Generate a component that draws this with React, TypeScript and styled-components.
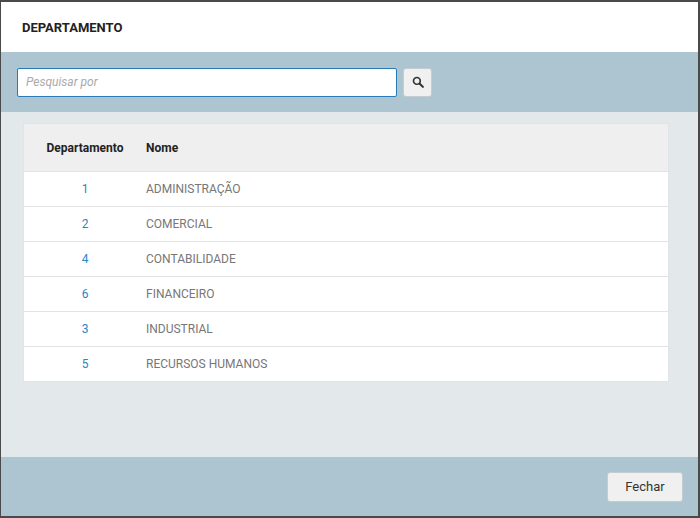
import styled, { createGlobalStyle } from 'styled-components'

const Global = createGlobalStyle`
  html, body { margin: 0; padding: 0; background: #4a4a4a; }
  * { box-sizing: border-box; }
`

const rows = [
  { id: 1, name: 'ADMINISTRAÇÃO' },
  { id: 2, name: 'COMERCIAL' },
  { id: 4, name: 'CONTABILIDADE' },
  { id: 6, name: 'FINANCEIRO' },
  { id: 3, name: 'INDUSTRIAL' },
  { id: 5, name: 'RECURSOS HUMANOS' },
]

export default function App() {
  return (
    <>
      <Global />
      <Modal>
        <Header>DEPARTAMENTO</Header>
        <SearchBar>
          <Input placeholder="Pesquisar por" />
          <SearchButton>
            <svg width="12" height="12" viewBox="0 0 16 16">
              <circle cx="6.5" cy="6.5" r="4.5" fill="none" stroke="#333" strokeWidth="2.2" />
              <path d="M10 10 L14.5 14.5" stroke="#333" strokeWidth="2.8" strokeLinecap="round" />
            </svg>
          </SearchButton>
        </SearchBar>
        <Body>
          <Table>
            <HeadRow>
              <IdCell>Departamento</IdCell>
              <NameCell>Nome</NameCell>
            </HeadRow>
            {rows.map(r => (
              <Row key={r.id}>
                <IdCell $link>{r.id}</IdCell>
                <NameCell>{r.name}</NameCell>
              </Row>
            ))}
          </Table>
        </Body>
        <Footer>
          <CloseButton>Fechar</CloseButton>
        </Footer>
      </Modal>
    </>
  )
}

const Modal = styled.div`
  width: 700px;
  height: 518px;
  border: 2px solid #4a4a4a;
  border-left-width: 1px;
  display: flex;
  flex-direction: column;
  font-family: Roboto, 'Liberation Sans', sans-serif;
  background: #e3e8eb;
`

const Header = styled.div`
  height: 50px;
  background: #fff;
  padding: 0 0 0 21px;
  display: flex;
  align-items: center;
  font-size: 13px;
  font-weight: 700;
  color: #222;
`

const SearchBar = styled.div`
  height: 60px;
  background: #adc4d1;
  display: flex;
  align-items: center;
  gap: 6px;
  padding: 0 16px;
`

const Input = styled.input`
  width: 380px;
  height: 29px;
  border: 1px solid #2a7ab8;
  border-radius: 2px;
  padding: 0 8px;
  font-family: inherit;
  font-size: 12px;
  outline: none;
  &::placeholder { color: #aaa; font-style: italic; }
`

const SearchButton = styled.button`
  width: 29px;
  height: 29px;
  border: 1px solid #c4ccd1;
  border-radius: 3px;
  background: #f0f0f0;
  display: flex;
  align-items: center;
  justify-content: center;
  padding: 0;
`

const Body = styled.div`
  flex: 1;
  padding: 11px 29px 0 22px;
`

const Table = styled.div`
  background: #fff;
  border: 1px solid #e1e4e6;
`

const HeadRow = styled.div`
  display: flex;
  align-items: center;
  height: 47px;
  background: #efefef;
  font-size: 12px;
  font-weight: 700;
  color: #222;
`

const Row = styled.div`
  display: flex;
  align-items: center;
  height: 35px;
  border-top: 1px solid #e3e3e3;
  font-size: 12px;
  color: #777;
`

const IdCell = styled.div<{ $link?: boolean }>`
  width: 122px;
  text-align: center;
  color: ${p => (p.$link ? '#2b84c3' : 'inherit')};
`

const NameCell = styled.div`
  padding-left: 0;
`

const Footer = styled.div`
  height: 59px;
  background: #adc4d1;
  display: flex;
  align-items: center;
  justify-content: flex-end;
  padding-right: 15px;
`

const CloseButton = styled.button`
  width: 76px;
  height: 30px;
  border: 1px solid #c4ccd1;
  border-radius: 3px;
  background: #f0f0f0;
  font-family: inherit;
  font-size: 13px;
  color: #333;
`
